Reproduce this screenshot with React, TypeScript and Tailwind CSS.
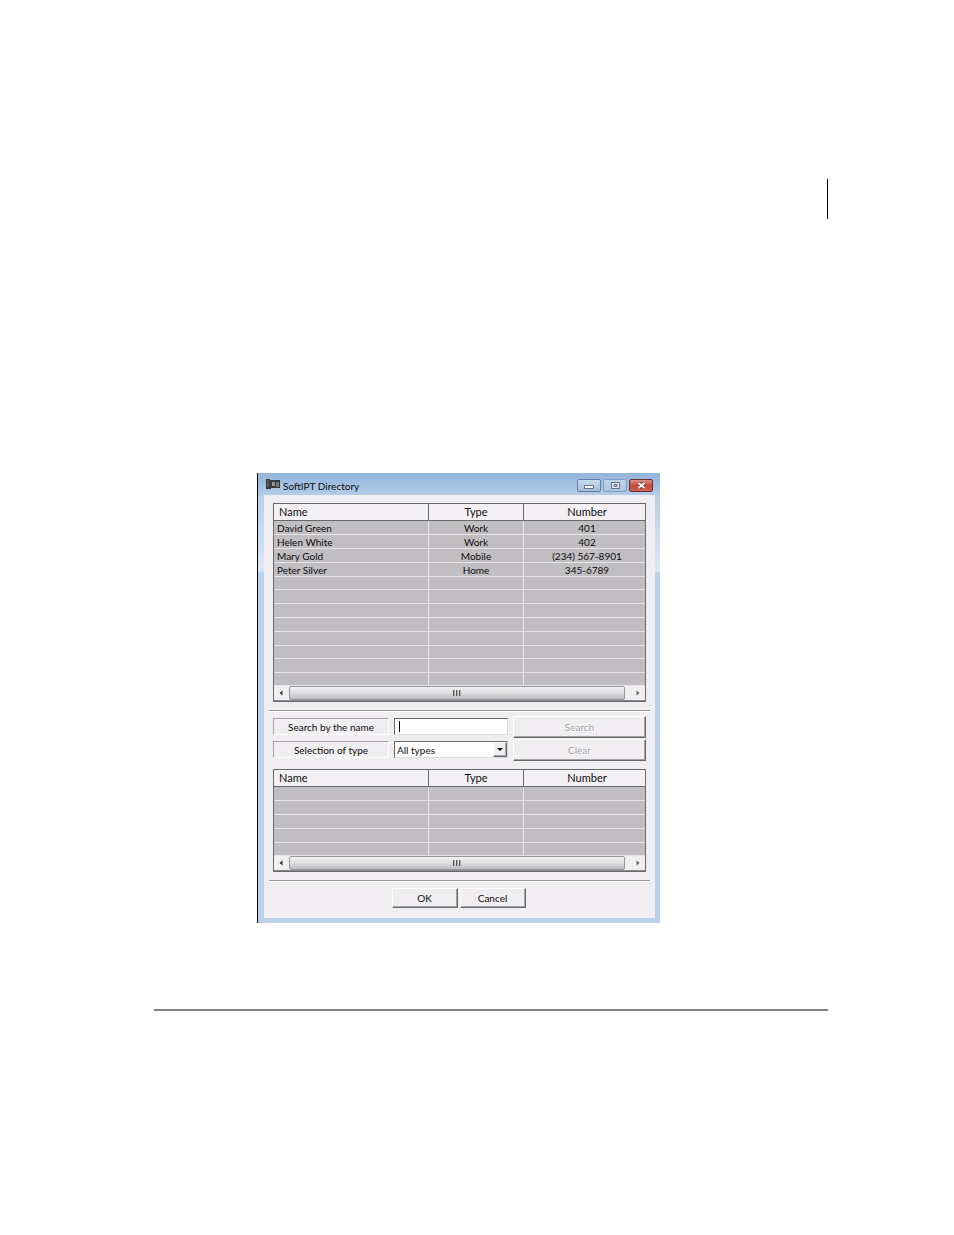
import { useState } from "react";

type Contact = {
    name: string;
    type: string;
    number: string;
};

const contacts: Contact[] = [
    { name: "David Green", type: "Work", number: "401" },
    { name: "Helen White", type: "Work", number: "402" },
    { name: "Mary Gold", type: "Mobile", number: "(234) 567-8901" },
    { name: "Peter Silver", type: "Home", number: "345-6789" },
];

const raised =
    "border border-t-white border-l-white border-r-[#69696b] border-b-[#69696b] shadow-[inset_-1px_-1px_0_#a5a3a6]";

function ScrollBar() {
    return (
        <div className="flex h-[15px] items-stretch border-b border-[#8b898c] bg-[#f0eef1]">
            <button
                type="button"
                aria-label="Scroll left"
                className="flex w-[15px] items-center justify-center pr-[2px]"
            >
                <svg width="4" height="6" viewBox="0 0 4 6">
                    <path d="M3.5 0.5v5L0.5 3z" fill="#333" />
                </svg>
            </button>
            <div className="flex grow items-center justify-center rounded-xs border border-[#99979b] bg-linear-to-b from-[#f3f3f4] via-[#dedde0] to-[#bcbbc0]">
                <svg width="8" height="6" viewBox="0 0 8 6">
                    <path d="M1.5 0v6M4.5 0v6M7.5 0v6" stroke="#ababae" />
                    <path d="M0.5 0v6M3.5 0v6M6.5 0v6" stroke="#59595c" />
                </svg>
            </div>
            <button
                type="button"
                aria-label="Scroll right"
                className="flex w-5 items-center justify-center pl-[5px]"
            >
                <svg width="4" height="6" viewBox="0 0 4 6">
                    <path d="M0.5 0.5v5L3.5 3z" fill="#666" />
                </svg>
            </button>
        </div>
    );
}

function ContactTable({ rows, size }: { rows: Contact[]; size: number }) {
    const filled = Array.from({ length: size }, (_, i) => rows[i]);
    return (
        <div className="border border-[#69696b]">
            <table className="w-full table-fixed border-separate border-spacing-0 text-center">
                <colgroup>
                    <col className="w-[155px]" />
                    <col className="w-[95px]" />
                    <col />
                </colgroup>
                <thead className="text-[11px]">
                    <tr className="h-[17px] bg-[#f3f1f4]">
                        <th className="border-r border-b border-[#69696b] p-0 pl-[5px] text-left font-normal">
                            Name
                        </th>
                        <th className="border-r border-b border-[#69696b] p-0 font-normal">
                            Type
                        </th>
                        <th className="border-b border-[#69696b] p-0 pl-[5px] font-normal">
                            Number
                        </th>
                    </tr>
                </thead>
                <tbody className="bg-[#c0bec1] leading-3">
                    {filled.map((el, index) => (
                        <tr key={index} className="h-[14px] last:h-[13px] nth-[5n]:h-[13px]">
                            <td className="border-r border-b border-[#e6e4e7] p-0 pl-[3px] text-left">
                                {el?.name}
                            </td>
                            <td className="border-r border-b border-[#e6e4e7] p-0">
                                {el?.type}
                            </td>
                            <td className="border-b border-[#e6e4e7] p-0 pl-[5px]">
                                {el?.number}
                            </td>
                        </tr>
                    ))}
                </tbody>
            </table>
            <ScrollBar />
        </div>
    );
}

function TitleBar() {
    return (
        <header className="flex h-[22px] items-center bg-linear-to-b from-[#91b4d8] to-[#b3cce8] pr-[7px] pl-2">
            <svg width="14" height="10" viewBox="0 0 14 10">
                <path d="M0 0h4v1h10v8H5v1H0z" fill="#37383c" />
                <path d="M1 1h2v7H1z" fill="#56575a" />
                <path d="M6 3h3v4H6z" fill="#8e9992" />
                <path d="M10 3h3v5h-3z" fill="#75777a" />
            </svg>
            <h1 className="ml-[3px] grow pt-[3px]">SoftIPT Directory</h1>
            <div className="mt-[3px] flex gap-[2px]">
                <button
                    type="button"
                    aria-label="Minimize"
                    className="flex h-[13px] w-6 items-center justify-center rounded-xs border border-[#65809f] bg-linear-to-b from-[#c9dcef] to-[#a1bddb]"
                >
                    <svg width="10" height="4" viewBox="0 0 10 4" className="mt-[3px]">
                        <path d="M0.5 0.5h9v3h-9z" fill="#fff" stroke="#6b7380" />
                    </svg>
                </button>
                <button
                    type="button"
                    aria-label="Maximize"
                    className="flex h-[13px] w-6 items-center justify-center rounded-xs border border-[#839fbe] bg-linear-to-b from-[#bdd3ea] to-[#abc5e1]"
                >
                    <svg width="9" height="7" viewBox="0 0 9 7">
                        <path d="M0.5 0.5h8v6h-8z" fill="#e4ebf2" stroke="#66758a" />
                        <path d="M3 2.5h3v2H3z" fill="#b3c8df" stroke="#66758a" />
                    </svg>
                </button>
                <button
                    type="button"
                    aria-label="Close"
                    className="flex h-[13px] w-6 items-center justify-center rounded-xs border border-[#702c33] bg-linear-to-b from-[#dc9189] via-[#c7493b] to-[#c9614f]"
                >
                    <svg width="9" height="7" viewBox="0 0 9 7">
                        <path d="M1.5 1l6 5M7.5 1l-6 5" stroke="#653238" strokeWidth="3.4" />
                        <path d="M1.5 1l6 5M7.5 1l-6 5" stroke="#fff" strokeWidth="2" />
                    </svg>
                </button>
            </div>
        </header>
    );
}

export default function App() {
    const [name, setName] = useState("");
    const [type, setType] = useState("All types");

    return (
        <main className="min-h-screen bg-white pt-[179px] pr-[126px] pl-[154px] font-[Lato,'Open_Sans',sans-serif] text-[10px] leading-4 text-[#0c0c0e]">
            {/* change bar in the page margin */}
            <div className="ml-auto h-10 w-px bg-black" />

            <section className="mt-[254px] ml-[103px] max-w-[403px] border-l border-black bg-[#b9d1ea]">
                <TitleBar />
                <div className="bg-linear-to-b from-[#b7cfe8] from-0% via-[#dce8f5] via-[76px] to-[#b9d1ea] to-[78px] pr-[5px] pb-[5px] pl-[6px]">
                    <div className="bg-[#f0eef1] px-[5px] pt-2 pb-[10px]">
                        <div className="px-1">
                            <ContactTable rows={contacts} size={12} />
                        </div>

                        <hr className="mt-2 h-[2px] border-t border-b border-t-[#99979a] border-b-white" />

                        <form
                            className="mt-1 grid grid-cols-[116px_1fr_133px] items-start gap-x-[5px] gap-y-px px-1"
                            onSubmit={(e) => e.preventDefault()}
                        >
                            <label
                                htmlFor="name"
                                className="my-[2px] h-[17px] border border-t-[#a5a3a6] border-r-white border-b-white border-l-[#a5a3a6] text-center"
                            >
                                Search by the name
                            </label>
                            <div className="relative my-[2px] flex">
                                <input
                                    id="name"
                                    type="text"
                                    value={name}
                                    onChange={(e) => setName(e.target.value)}
                                    className="h-[17px] w-full border border-t-[#69696b] border-r-[#dddbde] border-b-[#dddbde] border-l-[#69696b] bg-white px-1 outline-none"
                                />
                                {!name && (
                                    <span className="absolute top-[3px] left-[5px] h-[11px] w-px bg-black" />
                                )}
                            </div>
                            <button
                                type="submit"
                                disabled
                                className={`h-[22px] text-[#a5a3a6] [text-shadow:1px_1px_0_#fff] ${raised}`}
                            >
                                Search
                            </button>

                            <label
                                htmlFor="type"
                                className="my-[2px] h-[17px] border border-t-[#a5a3a6] border-r-white border-b-white border-l-[#a5a3a6] text-center"
                            >
                                Selection of type
                            </label>
                            <div className="relative my-[2px] flex">
                                <select
                                    id="type"
                                    value={type}
                                    onChange={(e) => setType(e.target.value)}
                                    className="h-[17px] w-full appearance-none border border-t-[#69696b] border-r-[#dddbde] border-b-[#dddbde] border-l-[#69696b] bg-white pl-[2px] outline-none"
                                >
                                    <option>All types</option>
                                    <option>Work</option>
                                    <option>Mobile</option>
                                    <option>Home</option>
                                </select>
                                <span
                                    className={`pointer-events-none absolute top-px right-px bottom-px flex w-[14px] items-center justify-center bg-[#f0eef1] ${raised}`}
                                >
                                    <svg width="6" height="3" viewBox="0 0 6 3">
                                        <path d="M0 0h6L3 3z" fill="#000" />
                                    </svg>
                                </span>
                            </div>
                            <button
                                type="reset"
                                disabled
                                className={`h-[22px] text-[#a5a3a6] [text-shadow:1px_1px_0_#fff] ${raised}`}
                            >
                                Clear
                            </button>
                        </form>

                        <div className="mt-2 px-1">
                            <ContactTable rows={[]} size={5} />
                        </div>

                        <hr className="mt-2 h-[2px] border-t border-b border-t-[#99979a] border-b-white" />

                        <div className="mt-[6px] flex justify-center gap-[2px] pr-[2px]">
                            <button type="button" className={`h-5 w-[66px] ${raised}`}>
                                OK
                            </button>
                            <button type="button" className={`h-5 w-[66px] ${raised}`}>
                                Cancel
                            </button>
                        </div>
                    </div>
                </div>
            </section>

            <hr className="mt-[86px] h-[2px] border-0 bg-[#808080]" />
        </main>
    );
}
